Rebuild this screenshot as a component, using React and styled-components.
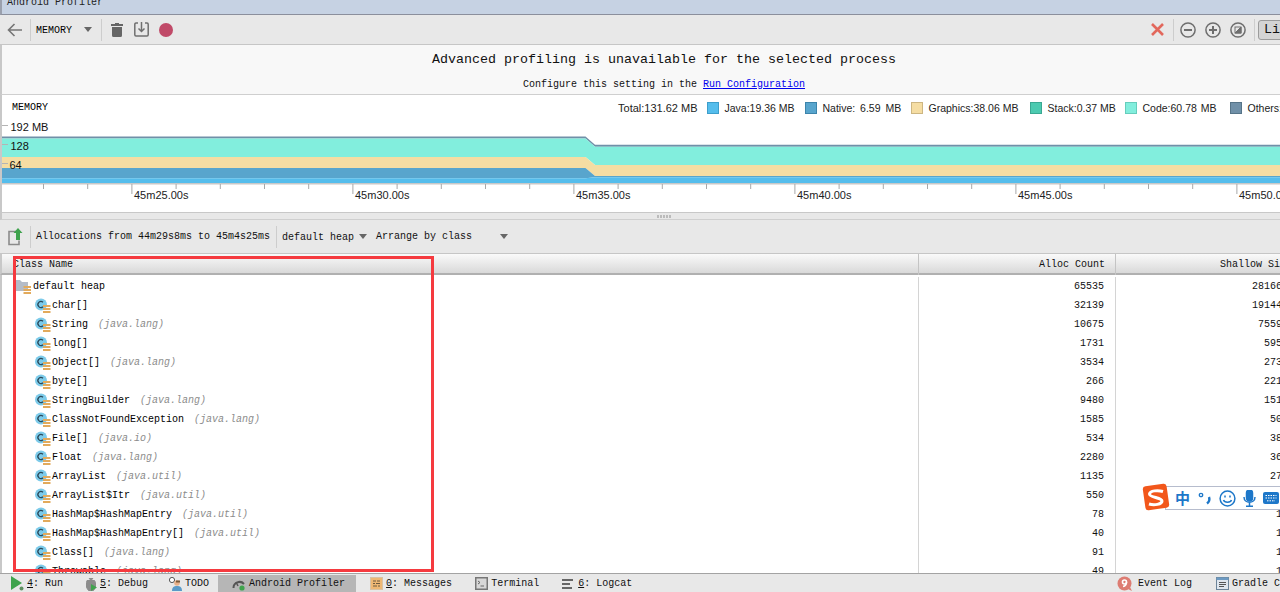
import React from "react";
import styled, { createGlobalStyle } from "styled-components";

const Global = createGlobalStyle`
  html, body { margin: 0; padding: 0; background: #fff; overflow: hidden; }
  * { box-sizing: border-box; }
`;
const MONO = `"Liberation Mono", "DejaVu Sans Mono", monospace`;
const SANS = `"Liberation Sans", Arial, sans-serif`;

const Page = styled.div`
  position: relative; width: 1280px; height: 592px; overflow: hidden;
  display: flex; flex-direction: column;
  font: 10px/14px ${MONO}; color: #000;
`;
const TitleBar = styled.div`
  height: 15px; flex: none; overflow: hidden;
  background: #c6d2e3; border-bottom: 1px solid #8b8f9c; border-left: 2px solid #9aa0ad;
  line-height: 6px; color: #222; padding-left: 5px;
`;
const Toolbar = styled.div`
  height: 30px; flex: none; display: flex; align-items: center;
  background: #e8e8e8; border-bottom: 1px solid #c6c6c6; padding-left: 7px;
`;
const Sep = styled.span`
  width: 1px; height: 22px; background: #cdcdcd; flex: none; margin: ${(p) => p.$m || "0"};
`;
const Spacer = styled.div` flex: 1; `;
const IconSlot = styled.span`
  display: inline-flex; flex: none; margin: ${(p) => p.$m || "0"};
`;
const ModeLabel = styled.span` margin-top: 2px; `;
const RightGroup = styled.div`
  display: flex; align-items: center; margin-right: ${(p) => p.$mr}px;
`;
const LiveButton = styled.button`
  width: 46px; height: 20px; margin-left: 3px; padding: 0 0 0 5px; text-align: left;
  border: 1px solid #9b9b9b; border-radius: 3px; background: #d4d4d4;
  font: 13.33px ${MONO}; color: #111;
`;
const Banner = styled.div`
  height: 50px; flex: none; background: #f8f8f8; border-bottom: 1px solid #cfcfcf; border-left: 2px solid #c8c8c8;
  padding: 7px 0 0 46px; display: flex; flex-direction: column; align-items: center;
`;
const BannerTitle = styled.div` font-size: 13.33px; line-height: 16px; color: #111; `;
const BannerNote = styled.div` font-size: 10px; line-height: 14px; margin-top: 10px; color: #111; `;
const Link = styled.a` color: #0000ee; text-decoration: underline; `;
const ChartPanel = styled.div`
  height: 118px; flex: none; background: #fff; border-left: 2px solid #c8c8c8; border-bottom: 1px solid #c8c8c8;
  overflow: hidden;
`;
const ChartHead = styled.div`
  height: 23px; display: flex; align-items: center; padding: 2px 0 0 10px; white-space: nowrap;
`;
const ChartTitle = styled.span` margin-top: 1px; `;
const Legend = styled.div`
  display: flex; align-items: center; gap: 9px; margin-left: 570px;
  font: 10.5px/14px ${SANS}; color: #222;
`;
const LegendTotal = styled.span` font-size: 11px; `;
const LegendItem = styled.div` display: flex; align-items: center; gap: 6px; `;
const LegendLabel = styled.span` display: block; width: ${(p) => p.$w}px; word-spacing: ${(p) => p.$ws || 0}px; `;
const Swatch = styled.i`
  display: block; width: 12px; height: 12px; background: ${(p) => p.$c}; border: 1px solid ${(p) => p.$b};
`;
const Plot = styled.svg` display: block; `;
const Splitter = styled.div`
  height: 7px; flex: none; background: #e8e8e8; border-left: 2px solid #c8c8c8; border-bottom: 1px solid #cfcfcf;
  display: flex; justify-content: center; padding: 2px 0 0 46px;
`;
const Grip = styled.div`
  width: 15px; height: 3px;
  background-image: radial-gradient(circle at 1px 1px, #bbb 0.8px, transparent 1px);
  background-size: 3px 2px;
`;
const FilterBar = styled(Toolbar)`
  height: 34px; padding-left: 8px;
`;
const FilterText = styled.span` white-space: nowrap; margin: ${(p) => p.$m || "0"}; color: #111; `;
const Caret = styled.span`
  flex: none; width: 0; height: 0; margin: ${(p) => p.$m || "0"};
  border-left: 4.5px solid transparent; border-right: 4.5px solid transparent; border-top: 5px solid #666;
`;
const TableHead = styled.div`
  height: 21px; flex: none; display: grid; grid-template-columns: 917px 197px 187px; width: 1310px;
  background: linear-gradient(#fafafa, #d9d9d9); border-bottom: 2px solid #b0b0b0; border-left: 2px solid #c8c8c8;
  line-height: 21px;
`;
const HeadCell = styled.div`
  padding: ${(p) => (p.$right ? "0 10px 0 0" : "0 0 0 11px")};
  text-align: ${(p) => (p.$right ? "right" : "left")};
  border-right: 1px solid #c4c4c4;
  color: #111;
`;
const TableBody = styled.div`
  flex: 1; min-height: 0; overflow: hidden; padding-top: 2px; background: #fff; width: 1310px;
  border-left: 2px solid #c8c8c8;
`;
const Row = styled.div`
  height: 19px; display: grid; grid-template-columns: 917px 197px 187px; align-items: center;
`;
const NameCell = styled.div`
  display: flex; align-items: center; padding-left: ${(p) => (p.$root ? 13 : 33)}px; white-space: nowrap;
  border-right: 1px solid #d4d4d4; height: 19px;
`;
const NumCell = styled.div`
  text-align: right; padding-right: ${(p) => p.$pr}px; height: 19px; line-height: 19px;
  border-right: 1px solid #d4d4d4; color: #111;
`;
const ClassName = styled.span` margin-left: ${(p) => p.$ml}px; color: #000; `;
const Pkg = styled.span` font-style: italic; color: #8c8c8c; margin-left: 10px; `;
const StatusBar = styled.div`
  height: 19px; flex: none; display: flex; align-items: center; background: #e8e8e8;
  border-top: 1px solid #a3a3a3; padding: 1px 0 0 11px; position: relative; z-index: 1;
`;
const Tool = styled.div`
  display: flex; align-items: center; gap: ${(p) => p.$gap || 3}px; height: 18px; white-space: nowrap;
  margin: ${(p) => p.$m || "0"}; padding: ${(p) => p.$pad || "0"};
  background: ${(p) => (p.$active ? "#b6b6b6" : "transparent")}; color: #111;
`;
const Key = styled.span` text-decoration: underline; `;
const Annotation = styled.div`
  position: absolute; left: 13px; top: 256px; width: 421px; height: 316px;
  border: 3px solid #f53a3f; pointer-events: none;
`;
const Ime = styled.div`
  position: absolute; left: 1142px; top: 483px; display: flex; align-items: center; height: 28px; z-index: 2;
`;
const ImeBar = styled.div`
  position: absolute; left: 23px; top: 3px; width: 130px; height: 24px;
  background: #fff; border: 1px solid #b6bccd; border-right: 0;
  display: flex; align-items: center; padding-left: 9px; gap: 7px; color: #1d77c9;
`;
const ImeChar = styled.span`
  font: bold 15px/22px "Noto Sans CJK SC", sans-serif; color: #1d77c9; width: 16px;
`;
const ImeLogo = styled.svg` position: relative; z-index: 1; display: block; `;

const BackIcon = () => (
  <svg width="15" height="14" viewBox="0 0 15 14" fill="none" stroke="#757575" strokeWidth="1.6">
    <path d="M15 7H1.5M7.5 1L1.5 7l6 6" />
  </svg>
);
const TrashIcon = () => (
  <svg width="12" height="14" viewBox="0 0 12 14" fill="#666">
    <path d="M4 0h4v1h4v2H0V1h4zM1 4h10v8.5a1.5 1.5 0 0 1-1.5 1.5h-7A1.5 1.5 0 0 1 1 12.5z" />
  </svg>
);
const SaveIcon = () => (
  <svg width="15" height="15" viewBox="0 0 15 15" fill="none" stroke="#707070" strokeWidth="1.5">
    <path d="M4 1H2a1.2 1.2 0 0 0-1.2 1.2v10.6A1.2 1.2 0 0 0 2 14h11a1.2 1.2 0 0 0 1.2-1.2V2.2A1.2 1.2 0 0 0 13 1h-2" />
    <path d="M7.5 0v9M4.5 6.5l3 3 3-3" />
  </svg>
);
const RecordIcon = () => (
  <svg width="14" height="14"><circle cx="7" cy="7" r="7" fill="#c04a68" /></svg>
);
const CloseIcon = () => (
  <svg width="13" height="13" viewBox="0 0 13 13" stroke="#e2685c" strokeWidth="2.6">
    <path d="M1 1l11 11M12 1L1 12" />
  </svg>
);
const Round = ({ kind }) => (
  <svg width="16" height="16" viewBox="0 0 16 16" fill="none" stroke="#6e6e6e" strokeWidth="1.5">
    <circle cx="8" cy="8" r="7.1" />
    {kind !== "reset" && <path d="M4 8h8" strokeWidth="2" />}
    {kind === "plus" && <path d="M8 4v8" strokeWidth="2" />}
    {kind === "reset" && (
      <g strokeWidth="1">
        <rect x="5" y="5" width="6" height="6" />
        <path d="M11 5v6H5z" fill="#6e6e6e" />
      </g>
    )}
  </svg>
);
const ExportIcon = () => (
  <svg width="15" height="18" viewBox="0 0 15 18" fill="none">
    <path d="M9 3.5H1v13h10v-4" stroke="#8a8a8a" strokeWidth="1.6" />
    <path d="M10 0l4.5 5H12v7H8V5H5.500z" fill="#3fa34d" />
  </svg>
);
const FolderIcon = () => (
  <svg width="18" height="16" viewBox="0 0 18 16">
    <path d="M0 1h5l2 2h6v9H0z" fill="#b4bcc8" />
    <path d="M8.500 7h7.500v2H8.500zM8.500 10h7.500v2H8.500zM8.500 13h7.500v2H8.500z" fill="#e2aa5c" />
  </svg>
);
const ClassIcon = () => (
  <svg width="16" height="16" viewBox="0 0 16 16">
    <circle cx="6" cy="6.500" r="6" fill="#7dcbea" />
    <path d="M8 4.300A3 3 0 1 0 8 8.700" fill="none" stroke="#2b4a5a" strokeWidth="1.300" />
    <path d="M8 7h7.500v2H8zM8 10h7.500v2H8zM8 13h7.500v2H8z" fill="#e2aa5c" />
  </svg>
);
const RunIcon = () => (
  <svg width="13" height="15" viewBox="0 0 13 15">
    <path d="M0 0l11 7L0 14z" fill="#3fa34d" />
    <circle cx="10.500" cy="12.500" r="2" fill="#5d8f5f" />
  </svg>
);
const DebugIcon = () => (
  <svg width="13" height="14" viewBox="0 0 13 14">
    <path d="M2 3.500h7.500l1 2v5l-2 3h-5l-2-3v-5z M4 1l1.500 2h1L8 1" fill="#8c8c8c" stroke="#8c8c8c" />
    <path d="M6 7l6 3.500L6 14z" fill="#3fa34d" />
  </svg>
);
const TodoIcon = () => (
  <svg width="15" height="14" viewBox="0 0 15 14">
    <circle cx="4" cy="3" r="2.600" fill="#fff" stroke="#555" />
    <circle cx="9" cy="6" r="2.800" fill="#e8b088" />
    <path d="M8 3.500h4v2H8z" fill="#7a5a3a" />
    <path d="M4 14c0-4 2-5 5-5s5 1 5 5z" fill="#5a9ac8" />
  </svg>
);
const GaugeIcon = () => (
  <svg width="14" height="14" viewBox="0 0 14 14" fill="none">
    <path d="M1.500 11A6 6 0 0 1 12 7" stroke="#555" strokeWidth="2" />
    <path d="M6 9L4 5" stroke="#555" strokeWidth="1.500" />
    <circle cx="10" cy="11" r="2.600" fill="#3fa34d" />
  </svg>
);
const MessagesIcon = () => (
  <svg width="13" height="13" viewBox="0 0 13 13">
    <rect x=".5" y=".5" width="12" height="12" fill="#eeb874" stroke="#d9c3a4" />
    <path d="M3 4h3M7 4h3M3 6.500h2M6 6.500h4M3 9h4M8 9h2" stroke="#6d5a3e" />
  </svg>
);
const TerminalIcon = () => (
  <svg width="13" height="13" viewBox="0 0 13 13" fill="none">
    <rect x=".75" y=".75" width="11.500" height="11.500" stroke="#777" strokeWidth="1.500" fill="#d8d8d8" />
    <path d="M3 4l2 1.500L3 7M5.500 9H9" stroke="#666" />
  </svg>
);
const LogcatIcon = () => (
  <svg width="12" height="10" viewBox="0 0 12 10">
    <path d="M0 0h11v2H0zM0 4h8v2H0zM0 8h10v2H0z" fill="#666" />
  </svg>
);
const EventIcon = () => (
  <svg width="16" height="16" viewBox="0 0 16 16">
    <circle cx="7.500" cy="7.500" r="7" fill="#dd7c72" />
    <path d="M11 13l4 2-2-4z" fill="#dd7c72" />
    <circle cx="7.500" cy="6" r="2" fill="none" stroke="#fff" strokeWidth="1.600" />
    <path d="M9.500 6c0 3-1 4-3.500 4.500" fill="none" stroke="#fff" strokeWidth="1.600" />
  </svg>
);
const GradleIcon = () => (
  <svg width="13" height="13" viewBox="0 0 13 13" fill="none">
    <rect x=".5" y=".5" width="12" height="12" fill="#dfe6ee" stroke="#6d8499" />
    <rect x=".5" y=".5" width="12" height="2.500" fill="#6d9ac2" />
    <path d="M3 5.500h7M3 7.500h7M3 9.500h5" stroke="#555" />
  </svg>
);

const TICKS = Array.from({ length: 30 }, (_, i) => i);
const MAJOR = [132, 353, 574, 795, 1016, 1237];
const LABELS = ["45m25.00s", "45m30.00s", "45m35.00s", "45m40.00s", "45m45.00s", "45m50.00s"];

const band = (t1, b1, t2, b2) =>
  `2,${t1} 585.5,${t1} 595,${t2} 1280,${t2} 1280,${b2} 595,${b2} 585.5,${b1} 2,${b1}`;

const Chart = () => (
  <Plot width="1278" height="94" viewBox="2 118 1278 94">
    <polygon points={band(136.4, 138.4, 144.7, 146.7)} fill="#7090a8" />
    <polygon points={band(138.4, 157, 146.7, 165)} fill="#82eedd" />
    <polygon points={band(157, 168, 165, 176)} fill="#f5dda3" />
    <polygon points={band(168, 178.3, 176, 177.3)} fill="#58a5cd" />
    <polygon points={band(178.3, 183, 177.3, 183)} fill="#55bdec" />
    <rect x="2" y="183" width="1278" height="1.500" fill="#c8c8c8" />
    {[125.5, 144.5, 163.5].map((y) => (
      <line key={y} x1="2" x2="8" y1={y} y2={y} stroke="#b4b4b4" />
    ))}
    <g fontFamily={SANS} fontSize="11" fill="#111">
      <text x="10.500" y="131">192 MB</text>
      <text x="10.500" y="150">128</text>
      <text x="9.500" y="169">64</text>
    </g>
    {TICKS.map((i) => {
      const x = 43.5 + i * 44.2;
      return <line key={i} x1={x} x2={x} y1="184" y2={i % 5 === 2 ? 194 : 189} stroke="#a8a8a8" />;
    })}
    <g fontFamily={SANS} fontSize="11" fill="#222">
      {MAJOR.map((x, i) => (
        <text key={x} x={x + 2} y="199">{LABELS[i]}</text>
      ))}
    </g>
  </Plot>
);

const LEGEND = [
  ["Java:19.36 MB", "#55bdec", "#3d9ecb", 71, 0],
  ["Native: 6.59 MB", "#58a5cd", "#3c84ab", 79, 2],
  ["Graphics:38.06 MB", "#f5dda3", "#cdb682", 92, 0],
  ["Stack:0.37 MB", "#4ccab0", "#3aa892", 68, 0],
  ["Code:60.78 MB", "#82eedd", "#66cdbc", 78, 1],
  ["Others:", "#7090a8", "#567488", 40, 0],
];

const ROWS = [
  ["char[]", "", "32139", "1914400"],
  ["String", "java.lang", "10675", "755900"],
  ["long[]", "", "1731", "59500"],
  ["Object[]", "java.lang", "3534", "27300"],
  ["byte[]", "", "266", "22100"],
  ["StringBuilder", "java.lang", "9480", "15100"],
  ["ClassNotFoundException", "java.lang", "1585", "5000"],
  ["File[]", "java.io", "534", "3800"],
  ["Float", "java.lang", "2280", "3600"],
  ["ArrayList", "java.util", "1135", "2700"],
  ["ArrayList$Itr", "java.util", "550", "2200"],
  ["HashMap$HashMapEntry", "java.util", "78", "187"],
  ["HashMap$HashMapEntry[]", "java.util", "40", "160"],
  ["Class[]", "java.lang", "91", "145"],
  ["Throwable", "java.lang", "49", "120"],
];

export default function App() {
  return (
    <Page>
      <Global />
      <TitleBar>Android Profiler</TitleBar>
      <Toolbar>
        <IconSlot><BackIcon /></IconSlot>
        <Sep $m="0 5px 0 8px" />
        <ModeLabel>MEMORY</ModeLabel>
        <Caret $m="0 0 0 12px" />
        <Sep $m="0 9px 0 9px" />
        <IconSlot><TrashIcon /></IconSlot>
        <IconSlot $m="0 0 0 11px"><SaveIcon /></IconSlot>
        <IconSlot $m="0 0 0 10px"><RecordIcon /></IconSlot>
        <Spacer />
        <RightGroup $mr={-24}>
          <IconSlot><CloseIcon /></IconSlot>
          <Sep $m="0 6px 0 9px" />
          <IconSlot><Round kind="minus" /></IconSlot>
          <IconSlot $m="0 0 0 9px"><Round kind="plus" /></IconSlot>
          <IconSlot $m="0 0 0 9px"><Round kind="reset" /></IconSlot>
          <Sep $m="0 0 0 8px" />
          <LiveButton>Live</LiveButton>
        </RightGroup>
      </Toolbar>
      <Banner>
        <BannerTitle>Advanced profiling is unavailable for the selected process</BannerTitle>
        <BannerNote>Configure this setting in the <Link href="#">Run Configuration</Link></BannerNote>
      </Banner>
      <ChartPanel>
        <ChartHead>
          <ChartTitle>MEMORY</ChartTitle>
          <Legend>
            <LegendTotal>Total:131.62 MB</LegendTotal>
            {LEGEND.map(([label, c, b, w, ws]) => (
              <LegendItem key={label}>
                <Swatch $c={c} $b={b} />
                <LegendLabel $w={w} $ws={ws}>{label}</LegendLabel>
              </LegendItem>
            ))}
          </Legend>
        </ChartHead>
        <Chart />
      </ChartPanel>
      <Splitter><Grip /></Splitter>
      <FilterBar>
        <IconSlot><ExportIcon /></IconSlot>
        <Sep $m="0 5px 0 7px" />
        <FilterText>Allocations from 44m29s8ms to 45m4s25ms</FilterText>
        <Sep $m="0 5px 0 6px" />
        <FilterText $m="3px 0 0 0">default heap</FilterText>
        <Caret $m="0 0 0 5px" />
        <FilterText $m="0 0 0 9px">Arrange by class</FilterText>
        <Caret $m="0 0 0 28px" />
      </FilterBar>
      <TableHead>
        <HeadCell>Class Name</HeadCell>
        <HeadCell $right>Alloc Count</HeadCell>
        <HeadCell $right>Shallow Size</HeadCell>
      </TableHead>
      <TableBody>
        <Row>
          <NameCell $root><FolderIcon /><ClassName $ml={0}>default heap</ClassName></NameCell>
          <NumCell $pr={11}>65535</NumCell>
          <NumCell $pr={8}>2816640</NumCell>
        </Row>
        {ROWS.map(([name, pkg, count, size]) => (
          <Row key={name}>
            <NameCell>
              <ClassIcon />
              <ClassName $ml={1}>{name}</ClassName>
              {pkg && <Pkg>({pkg})</Pkg>}
            </NameCell>
            <NumCell $pr={11}>{count}</NumCell>
            <NumCell $pr={8}>{size}</NumCell>
          </Row>
        ))}
      </TableBody>
      <StatusBar>
        <Tool><RunIcon /><span><Key>4</Key>: Run</span></Tool>
        <Tool $m="0 0 0 22px" $gap={2}><DebugIcon /><span><Key>5</Key>: Debug</span></Tool>
        <Tool $m="0 0 0 20px" $gap={2}><TodoIcon /><span>TODO</span></Tool>
        <Tool $active $m="0 0 0 9px" $pad="0 11px 0 14px"><GaugeIcon /><span>Android Profiler</span></Tool>
        <Tool $m="0 0 0 14px"><MessagesIcon /><span><Key>0</Key>: Messages</span></Tool>
        <Tool $m="0 0 0 23px"><TerminalIcon /><span>Terminal</span></Tool>
        <Tool $m="0 0 0 23px" $gap={4}><LogcatIcon /><span><Key>6</Key>: Logcat</span></Tool>
        <Spacer />
        <RightGroup $mr={-36}>
          <Tool $gap={5}><EventIcon /><span>Event Log</span></Tool>
          <Tool $m="0 0 0 24px"><GradleIcon /><span>Gradle Console</span></Tool>
        </RightGroup>
      </StatusBar>
      <Annotation />
      <Ime>
        <ImeLogo width="28" height="28" viewBox="0 0 28 28">
          <rect x="2" y="2" width="24" height="24" rx="3" fill="#f2571b" transform="rotate(-8 14 14)" />
          <path d="M21 8.500C16 7 8 7.500 7.500 11S20 14.500 20 18s-8 4.500-13 3" fill="none" stroke="#fff" strokeWidth="3" />
        </ImeLogo>
        <ImeBar>
          <ImeChar>中</ImeChar>
          <svg width="14" height="14" viewBox="0 0 14 14" fill="none" stroke="#1d77c9">
            <circle cx="3" cy="4" r="1.700" strokeWidth="1.300" />
            <path d="M11 6c1 3 0 5-2 6.500" strokeWidth="2.400" />
          </svg>
          <svg width="17" height="17" viewBox="0 0 17 17" fill="none" stroke="#1d77c9" strokeWidth="1.500">
            <circle cx="8.500" cy="8.500" r="7.400" />
            <path d="M4.500 10c1 3 7 3 8 0M6 5.500v2M11 5.500v2" />
          </svg>
          <svg width="13" height="17" viewBox="0 0 13 17" fill="none" stroke="#1d77c9" strokeWidth="1.500">
            <rect x="3.500" y="0" width="6" height="11" rx="3" fill="#1d77c9" />
            <path d="M1 7c0 7 11 7 11 0M6.500 12v4M3 16.300h7" />
          </svg>
          <svg width="16" height="12" viewBox="0 0 16 12">
            <rect width="16" height="12" rx="2" fill="#1d77c9" />
            <path d="M2.500 3.500h11M2.500 6h11M4 8.800h8" stroke="#fff" strokeDasharray="1.500 1" />
          </svg>
        </ImeBar>
      </Ime>
    </Page>
  );
}
